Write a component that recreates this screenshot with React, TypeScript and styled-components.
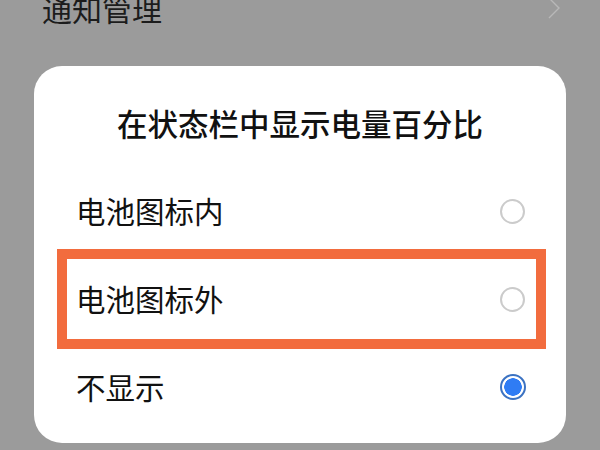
import styled, { createGlobalStyle, css } from 'styled-components'

const GlobalStyle = createGlobalStyle`
  html, body {
    margin: 0;
    padding: 0;
    background: #9b9b9b;
  }
  body {
    font-family: "Noto Sans CJK SC", "Noto Sans", sans-serif;
  }
`

interface Option {
  id: string
  label: string
}

const options: Option[] = [
  { id: 'inside', label: '电池图标内' },
  { id: 'outside', label: '电池图标外' },
  { id: 'hidden', label: '不显示' }
]

const App: React.FC = () => {
  const selected = 'hidden'
  const highlighted = 'outside'

  return (
    <>
      <GlobalStyle />
      <Screen>
        <SettingsList>
          <SettingsRow>
            <SettingsLabel>通知管理</SettingsLabel>
            <svg width="12" height="22" viewBox="0 0 12 22">
              <polyline points="1,1 11,11 1,21" fill="none" stroke="#b8b8b8" strokeWidth="1.4" />
            </svg>
          </SettingsRow>
        </SettingsList>
        <Dialog>
          <DialogTitle>在状态栏中显示电量百分比</DialogTitle>
          <OptionList>
            {options.map((option) => (
              <OptionRow key={option.id} highlighted={option.id === highlighted}>
                <OptionLabel>{option.label}</OptionLabel>
                <Radio checked={option.id === selected} />
              </OptionRow>
            ))}
          </OptionList>
        </Dialog>
      </Screen>
    </>
  )
}

const Screen = styled.div`
  position: relative;
  width: 600px;
  height: 450px;
  overflow: hidden;
  background: #9b9b9b;
`

const SettingsList = styled.div`
  display: flex;
  flex-direction: column;
  margin-top: -36px;
`

const SettingsRow = styled.div`
  display: flex;
  align-items: center;
  justify-content: space-between;
  height: 88px;
  padding: 0 40px 0 42px;
`

const SettingsLabel = styled.span`
  font-size: 30px;
  color: #1c1c1c;
  line-height: 1;
`

const Dialog = styled.div`
  position: absolute;
  left: 34px;
  top: 66px;
  width: 532px;
  height: 377px;
  box-sizing: border-box;
  background: #ffffff;
  border-radius: 28px;
  padding: 36px 26px 12px 29px;
  display: flex;
  flex-direction: column;
`

const DialogTitle = styled.div`
  font-size: 30.5px;
  font-weight: 500;
  line-height: 42px;
  text-align: center;
  color: #111;
  margin-left: -3px;
`

const OptionList = styled.div`
  display: flex;
  flex-direction: column;
  margin-top: 23px;
`

const OptionRow = styled.div<{ highlighted?: boolean }>`
  display: flex;
  align-items: center;
  justify-content: space-between;
  height: 88px;
  padding: 0 15px 0 13px;
  ${(props) => props.highlighted && css`
    outline: 10px solid #f26c3e;
    outline-offset: -4px;
  `}
`

const OptionLabel = styled.span`
  font-size: 29.5px;
  line-height: 1;
  color: #111;
`

const Radio = styled.span<{ checked?: boolean }>`
  display: block;
  box-sizing: border-box;
  width: 25px;
  height: 25px;
  border-radius: 50%;
  border: 2px solid #cbcbcb;
  ${(props) => props.checked && css`
    width: 26px;
    height: 26px;
    margin-right: -0.5px;
    border: 2.5px solid #3b72c2;
    background: radial-gradient(circle, #2f7cf4 0 8.5px, #ffffff 9px);
  `}
`

export default App
